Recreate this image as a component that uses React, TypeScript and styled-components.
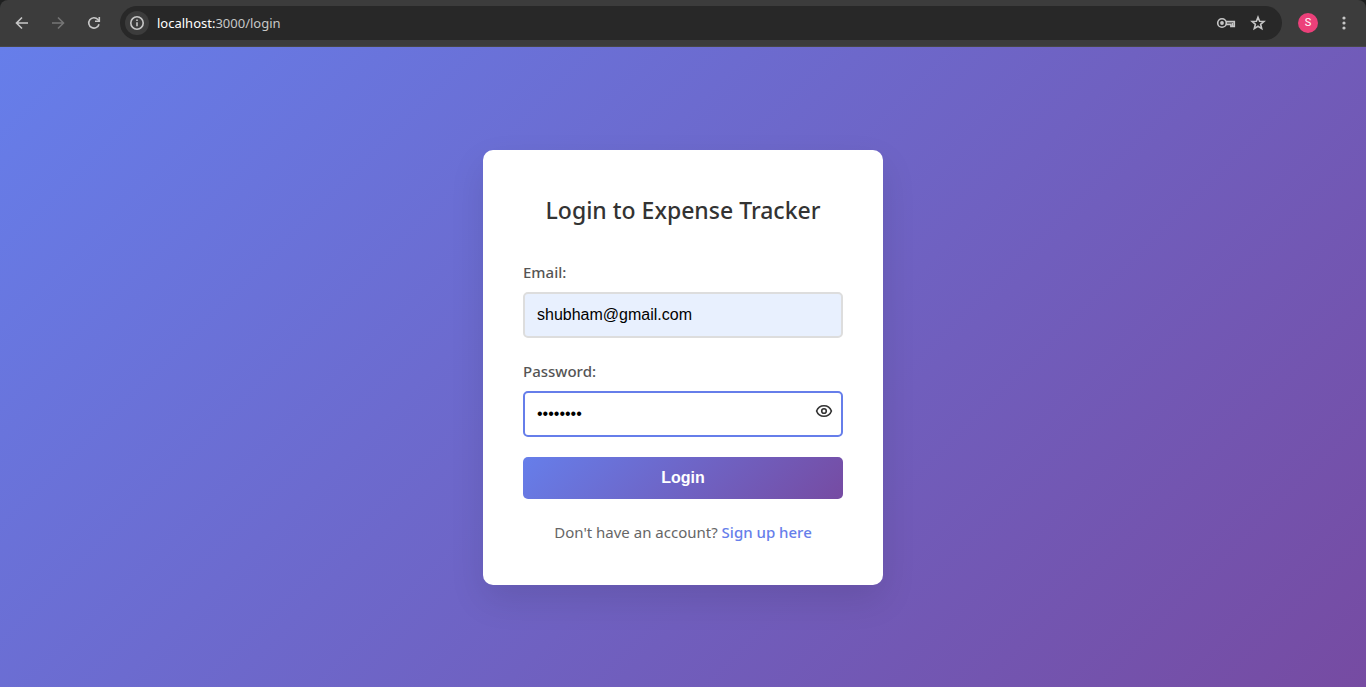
import React, { useState } from "react";
import styled, { createGlobalStyle } from "styled-components";

const uiFont = `"Segoe UI", "Noto Sans", "Open Sans", sans-serif`;
const formFont = `"Liberation Sans", Arial, sans-serif`;
const brandGradient = "linear-gradient(135deg, #667eea 0%, #764ba2 100%)";

const GlobalStyle = createGlobalStyle`
  *, *::before, *::after { box-sizing: border-box; }
  body { margin: 0; font-family: ${uiFont}; }
`;

const Window = styled.div`
  display: flex;
  flex-direction: column;
  min-height: 100vh;
  background: #1f2020;
`;

const Toolbar = styled.header`
  display: flex;
  align-items: center;
  height: 47px;
  padding: 0 10px;
  background: #3c3c3c;
  border-bottom: 1px solid #474747;
  border-radius: 8px 8px 0 0;
`;

const NavButtons = styled.nav`
  display: flex;
  gap: 12px;
  margin-right: 14px;
`;

const IconButton = styled.button<{ $color?: string }>`
  display: flex;
  align-items: center;
  justify-content: center;
  width: 24px;
  height: 24px;
  padding: 0;
  border: 0;
  border-radius: 50%;
  background: none;
  color: ${({ $color }) => $color ?? "#c7c7c7"};
  cursor: pointer;
`;

const AddressBar = styled.div`
  display: flex;
  flex: 1;
  align-items: center;
  height: 34px;
  padding: 0 12px 0 5px;
  border-radius: 17px;
  background: #282828;
`;

const SiteInfo = styled(IconButton)`
  margin-right: 8px;
  background: #3c3c3c;
`;

const Url = styled.div`
  flex: 1;
  color: #c7c7c7;
  font-size: 13px;
  line-height: 20px;
`;

const Host = styled.span`
  color: #ffffff;
`;

const AddressActions = styled.div`
  display: flex;
  gap: 8px;
`;

const Avatar = styled.button`
  width: 20px;
  height: 20px;
  margin: 0 14px 0 16px;
  padding: 0;
  border: 0;
  border-radius: 50%;
  background: #ec407a;
  color: #ffffff;
  font: 11px/20px Roboto, sans-serif;
  text-align: center;
`;

const Page = styled.main`
  display: flex;
  flex: 1;
  align-items: center;
  justify-content: center;
  padding: 20px;
  background: ${brandGradient};
`;

const Card = styled.form`
  width: 100%;
  max-width: 400px;
  padding: 40px;
  border-radius: 10px;
  background: #ffffff;
  box-shadow: 0 15px 35px rgba(0, 0, 0, 0.1);
`;

const Title = styled.h2`
  margin: 0 0 28px;
  color: #333333;
  font-size: 23px;
  font-weight: 500;
  line-height: 41px;
  text-align: center;
  white-space: nowrap;
`;

const Field = styled.div`
  margin-bottom: 20px;
`;

const Label = styled.label`
  display: block;
  margin-bottom: 7px;
  color: #555555;
  font-size: 15px;
  font-weight: 500;
  line-height: 26px;
`;

const InputWrap = styled.div`
  position: relative;
`;

const Input = styled.input<{ $autofilled?: boolean; $active?: boolean }>`
  display: block;
  width: 100%;
  height: 46px;
  padding: 12px;
  border: 2px solid ${({ $active }) => ($active ? "#667eea" : "#dddddd")};
  border-radius: 5px;
  outline: none;
  background: ${({ $autofilled }) => ($autofilled ? "#e8f0fe" : "#ffffff")};
  color: #000000;
  font: 16px/18px ${formFont};
`;

const RevealButton = styled(IconButton)`
  position: absolute;
  top: 8px;
  right: 7px;
`;

const Submit = styled.button`
  display: block;
  width: 100%;
  height: 42px;
  padding: 12px;
  border: 0;
  border-radius: 5px;
  background: ${brandGradient};
  color: #ffffff;
  font: 600 16px/18px ${formFont};
  cursor: pointer;
`;

const Prompt = styled.p`
  margin: 20px 0 0;
  color: #666666;
  font-size: 15px;
  line-height: 26px;
  text-align: center;
`;

const SignUpLink = styled.a`
  color: #667eea;
  font-weight: 500;
  text-decoration: none;
`;

const Icon = ({ size = 16, children }: { size?: number; children: React.ReactNode }) => (
  <svg
    width={size}
    height={size}
    viewBox={`0 0 ${size} ${size}`}
    fill="none"
    stroke="currentColor"
    strokeWidth="1.6"
    aria-hidden="true"
  >
    {children}
  </svg>
);

export default function App() {
  const [email, setEmail] = useState("shubham@gmail.com");
  const [password, setPassword] = useState("password");
  const [visible, setVisible] = useState(false);

  return (
    <Window>
      <GlobalStyle />
      <Toolbar>
        <NavButtons aria-label="History">
          <IconButton type="button" aria-label="Back">
            <Icon><path d="M14 8H2.8M8 2.5 2.5 8 8 13.5" /></Icon>
          </IconButton>
          <IconButton type="button" aria-label="Forward" $color="#757575">
            <Icon><path d="M2 8h11.2M8 2.5 13.5 8 8 13.5" /></Icon>
          </IconButton>
          <IconButton type="button" aria-label="Reload">
            <Icon>
              <path d="M13 9.2A5.2 5.2 0 1 1 11.9 4.5L13 5.8" />
              <path d="M13.3 2v4.3H9" />
            </Icon>
          </IconButton>
        </NavButtons>
        <AddressBar>
          <SiteInfo type="button" aria-label="Site information">
            <Icon>
              <circle cx="8" cy="8" r="6.2" />
              <path d="M8 7.2v4M8 4.6v1.5" />
            </Icon>
          </SiteInfo>
          <Url><Host>localhost:</Host>3000/login</Url>
          <AddressActions>
            <IconButton type="button" aria-label="Saved passwords">
              <Icon size={20}>
                <circle cx="6" cy="10" r="4.3" />
                <circle cx="6" cy="10" r="1.9" fill="currentColor" stroke="none" />
                <path d="M10 8.6h8.3v4.8h-3.4v-2H10" />
                <path d="M16.6 10v3" />
              </Icon>
            </IconButton>
            <IconButton type="button" aria-label="Bookmark this page">
              <Icon>
                <path d="M8 2.2 9.6 6.200l4.300.300-3.300 2.800 1.100 4.300L8 11.300l-3.700 2.300 1.100-4.300-3.300-2.800 4.300-.300Z" />
              </Icon>
            </IconButton>
          </AddressActions>
        </AddressBar>
        <Avatar type="button">S</Avatar>
        <IconButton type="button" aria-label="Menu">
          <Icon>
            <g fill="currentColor" stroke="none">
              <circle cx="8" cy="3" r="1.6" />
              <circle cx="8" cy="8" r="1.6" />
              <circle cx="8" cy="13" r="1.6" />
            </g>
          </Icon>
        </IconButton>
      </Toolbar>
      <Page>
        <Card onSubmit={(event) => event.preventDefault()}>
          <Title>Login to Expense Tracker</Title>
          <Field>
            <Label htmlFor="email">Email:</Label>
            <Input
              id="email"
              type="email"
              $autofilled
              value={email}
              onChange={(event) => setEmail(event.target.value)}
            />
          </Field>
          <Field>
            <Label htmlFor="password">Password:</Label>
            <InputWrap>
              <Input
                id="password"
                type={visible ? "text" : "password"}
                $active
                value={password}
                onChange={(event) => setPassword(event.target.value)}
              />
              <RevealButton
                type="button"
                aria-label="Show password"
                $color="#333333"
                onClick={() => setVisible(!visible)}
              >
                <Icon size={18}>
                  <path d="M1.6 9C2.8 5.600 5.500 3.700 9 3.700S15.200 5.600 16.400 9C15.200 12.400 12.500 14.300 9 14.300S2.800 12.400 1.600 9Z" />
                  <circle cx="9" cy="9" r="2.300" />
                </Icon>
              </RevealButton>
            </InputWrap>
          </Field>
          <Submit type="submit">Login</Submit>
          <Prompt>
            Don't have an account? <SignUpLink href="#signup">Sign up here</SignUpLink>
          </Prompt>
        </Card>
      </Page>
    </Window>
  );
}
